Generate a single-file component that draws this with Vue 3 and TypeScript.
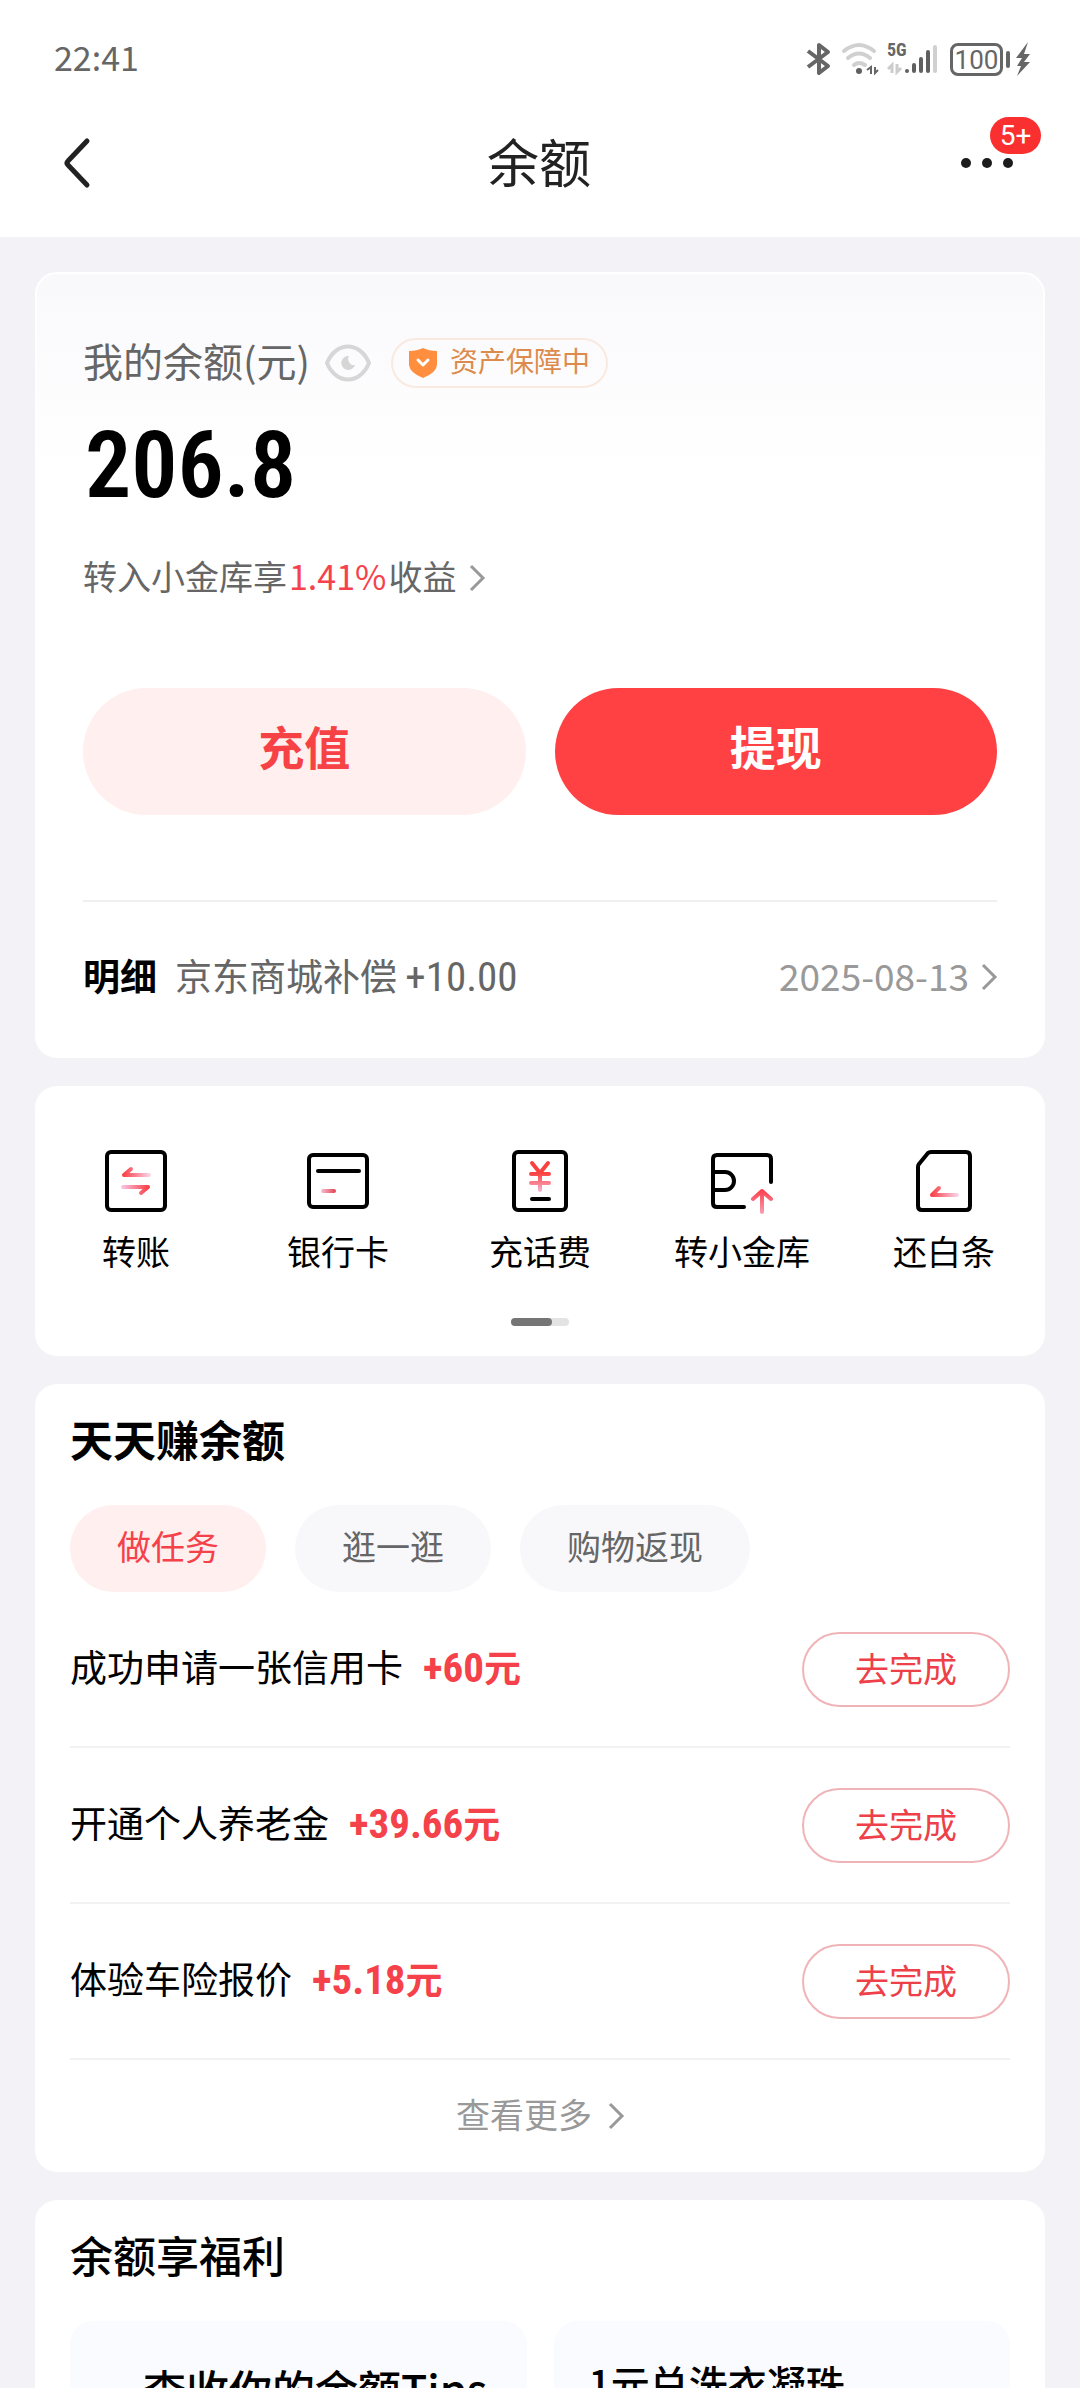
<script setup lang="ts">
import { ref } from 'vue'

type Shortcut = { id: string; label: string }
type Task = { name: string; reward: string }

const shortcuts: Shortcut[] = [
  { id: 'transfer', label: '转账' },
  { id: 'bank', label: '银行卡' },
  { id: 'phone', label: '充话费' },
  { id: 'vault', label: '转小金库' },
  { id: 'repay', label: '还白条' },
]

const tabs: string[] = ['做任务', '逛一逛', '购物返现']
const activeTab = ref<number>(0)

const tasks: Task[] = [
  { name: '成功申请一张信用卡', reward: '+60' },
  { name: '开通个人养老金', reward: '+39.66' },
  { name: '体验车险报价', reward: '+5.18' },
]
</script>

<template>
  <div class="page">
    <header class="top">
      <div class="status">
        <span class="time">22:41</span>
        <div class="status-icons">
          <svg class="bluetooth" width="24" height="34" viewBox="0 0 24 34" fill="none" stroke="#666" stroke-width="4" stroke-linejoin="round">
            <path d="M1 9 L21 24 L12 31 V3 L21 10 L1 25" />
          </svg>
          <svg class="wifi" width="38" height="34" viewBox="0 0 38 34" fill="none" stroke-linecap="round">
            <g stroke="#d0d0d0" stroke-width="4">
              <path d="M3 9 Q18 -3 33 9" />
              <path d="M7 16 Q18 7 29 16" />
              <path d="M13 23 Q18 19 24 23" />
            </g>
            <circle cx="18" cy="29" r="3" fill="#606060" />
            <path d="M26 28 L30 25 V32 M34 25 V31 L37 28" stroke="#666" stroke-width="2" stroke-linecap="butt" />
          </svg>
          <span class="signal">
            <svg width="51" height="34" viewBox="0 0 51 34" fill="none" stroke-linecap="round" stroke-width="4">
              <path d="M1 27 L5 23 V31 M10 22 V30 L14 26" stroke="#ccc" stroke-width="3" stroke-linecap="butt" />
              <path d="M20 29 V29 M27 23 V29 M34 17 V29 M41 10 V29" stroke="#606060" />
              <path d="M48 5 V29" stroke="#d0d0d0" />
            </svg>
            <b class="network">5G</b>
          </span>
          <span class="battery">100</span>
          <svg class="bolt" width="16" height="34" viewBox="0 0 16 34" fill="#666">
            <path d="M13 0 L1 16 H7 L2 24 H6 L2 34 L15 20 H9 L15 12 H9 Z" />
          </svg>
        </div>
      </div>
      <nav class="nav">
        <button class="icon-button" type="button" aria-label="返回">
          <svg width="26" height="50" viewBox="0 0 26 50" fill="none" stroke="#222" stroke-width="5" stroke-linecap="round" stroke-linejoin="round">
            <path d="M23 3 L4 23 Q2 25 4 27 L23 47" />
          </svg>
        </button>
        <h1 class="title">余额</h1>
        <button class="icon-button more" type="button" aria-label="更多">
          <svg width="54" height="12" viewBox="0 0 54 12" fill="#1c1c1c">
            <circle cx="6" cy="6" r="5" />
            <circle cx="27" cy="6" r="5" />
            <circle cx="48" cy="6" r="5" />
          </svg>
          <span class="count">5+</span>
        </button>
      </nav>
    </header>

    <main class="content">
      <section class="card balance">
        <div class="balance-head">
          <span class="balance-label">我的余额(元)</span>
          <button class="icon-button" type="button" aria-label="隐藏余额">
            <svg width="48" height="38" viewBox="0 0 48 38" fill="none">
              <path d="M3 19 C12 -3 36 -3 45 19 C36 41 12 41 3 19 Z" stroke="#d6d6d6" stroke-width="4" stroke-linejoin="round" />
              <path d="M25 12 A7 7 0 1 0 31 21 A6 6 0 0 1 25 12 Z" fill="#d6d6d6" />
            </svg>
          </button>
          <span class="guard">
            <svg width="28" height="32" viewBox="0 0 28 32">
              <path d="M14 1 Q20 4 28 4 V18 Q27 26 14 31 Q1 26 0 18 V4 Q8 4 14 1 Z" fill="#ff8f3e" />
              <path d="M9 13 L14 18 L19 13" fill="none" stroke="#fff" stroke-width="3" stroke-linecap="round" stroke-linejoin="round" />
            </svg>
            <span>资产保障中</span>
          </span>
        </div>
        <strong class="amount">206.8</strong>
        <a class="yield" href="#vault">
          <span>转入小金库享<em>1.41%</em>收益</span>
          <svg class="chevron" width="16" height="28" viewBox="0 0 16 28"><path d="M2 2 L14 14 L2 26" /></svg>
        </a>
        <div class="actions">
          <button class="action soft" type="button">充值</button>
          <button class="action solid" type="button">提现</button>
        </div>
        <a class="detail" href="#records">
          <b>明细</b>
          <span class="record">京东商城补偿 <span class="figure">+10.00</span></span>
          <time class="date" datetime="2025-08-13">2025-08-13</time>
          <svg class="chevron" width="16" height="28" viewBox="0 0 16 28"><path d="M2 2 L14 14 L2 26" /></svg>
        </a>
      </section>

      <section class="card">
        <svg class="defs" width="0" height="0" aria-hidden="true">
          <defs>
            <linearGradient id="fade-right" gradientUnits="userSpaceOnUse" x1="19" y1="0" x2="46" y2="0">
              <stop offset="0" stop-color="#fb3c44" />
              <stop offset="1" stop-color="#f8d4ea" />
            </linearGradient>
            <linearGradient id="fade-left" gradientUnits="userSpaceOnUse" x1="18" y1="0" x2="45" y2="0">
              <stop offset="0" stop-color="#f8c4e2" />
              <stop offset="1" stop-color="#fb3c44" />
            </linearGradient>
            <linearGradient id="fade-short" gradientUnits="userSpaceOnUse" x1="14" y1="0" x2="30" y2="0">
              <stop offset="0" stop-color="#fbc8da" />
              <stop offset="1" stop-color="#e04050" />
            </linearGradient>
            <linearGradient id="fade-down" gradientUnits="userSpaceOnUse" x1="0" y1="24" x2="0" y2="44">
              <stop offset="0" stop-color="#fb4040" />
              <stop offset="1" stop-color="#f8c0dc" />
            </linearGradient>
            <linearGradient id="fade-arrow" gradientUnits="userSpaceOnUse" x1="0" y1="40" x2="0" y2="64">
              <stop offset="0" stop-color="#fb3c48" />
              <stop offset="1" stop-color="#f89cb4" />
            </linearGradient>
          </defs>
        </svg>
        <ul class="shortcuts">
          <li v-for="item in shortcuts" :key="item.id">
            <a class="shortcut" :href="'#' + item.id">
              <svg class="shortcut-icon" width="64" height="64" viewBox="0 0 64 64">
                <template v-if="item.id === 'transfer'">
                  <rect x="3" y="3" width="58" height="58" rx="4" />
                  <path d="M45 26 H20 L27 20" stroke="url(#fade-right)" />
                  <path d="M19 38 H44 L37 44" stroke="url(#fade-left)" />
                </template>
                <template v-else-if="item.id === 'bank'">
                  <rect x="3" y="6" width="58" height="52" rx="4" />
                  <path d="M12 22 H53" />
                  <path d="M17 42 L28 42.01" stroke="url(#fade-short)" />
                </template>
                <template v-else-if="item.id === 'phone'">
                  <rect x="6" y="3" width="52" height="58" rx="4" />
                  <path d="M24 14 L32 24 L40 14 M32 24 V41 M23 25 H41 M23 34 H41" stroke="url(#fade-down)" />
                  <path d="M24 50 H41" />
                </template>
                <template v-else-if="item.id === 'vault'">
                  <path d="M61 33 V10 Q61 6 57 6 H7 Q3 6 3 10 V54 Q3 58 7 58 H34" />
                  <path d="M4 23 H15 A9 9 0 0 1 15 41 H4" />
                  <path d="M43 50 L52 42 L61 50 M52 42 L52.01 63" stroke="url(#fade-arrow)" />
                </template>
                <template v-else>
                  <path d="M19 3 H54 Q58 3 58 7 V57 Q58 61 54 61 H10 Q6 61 6 57 V18 Q6 16 7 15 L16 4 Q17 3 19 3 Z" />
                  <path d="M45 46 H20 L27 39" stroke="url(#fade-right)" />
                </template>
              </svg>
              {{ item.label }}
            </a>
          </li>
        </ul>
        <div class="pager"><i></i></div>
      </section>

      <section class="card padded">
        <h2 class="heading strong">天天赚余额</h2>
        <div class="tabs" role="tablist">
          <button
            v-for="(tab, i) in tabs"
            :key="tab"
            class="tab"
            :class="{ active: i === activeTab }"
            type="button"
            role="tab"
            :aria-selected="i === activeTab"
            @click="activeTab = i"
          >{{ tab }}</button>
        </div>
        <ul class="tasks">
          <li v-for="task in tasks" :key="task.name" class="task">
            <span class="task-name">{{ task.name }}<b class="reward"><span class="figure">{{ task.reward }}</span>元</b></span>
            <button class="go" type="button">去完成</button>
          </li>
        </ul>
        <a class="see-more" href="#tasks">
          <span>查看更多</span>
          <svg class="chevron" width="16" height="28" viewBox="0 0 16 28"><path d="M2 2 L14 14 L2 26" /></svg>
        </a>
      </section>

      <section class="card padded">
        <h2 class="heading">余额享福利</h2>
        <div class="benefits">
          <a class="benefit tips" href="#tips">查收你的余额Tips</a>
          <a class="benefit" href="#offer">1元兑洗衣凝珠</a>
        </div>
      </section>
    </main>
  </div>
</template>

<style>
body {
  margin: 0;
  background: #f2f2f7;
}
</style>

<style scoped>
.page {
  height: 100vh;
  overflow: hidden;
  background: #f2f2f7;
  color: #000;
  font-family: "Noto Sans CJK SC", "Noto Sans", sans-serif;
  font-size: 34px;
  line-height: 48px;
}
.page * {
  box-sizing: border-box;
}
button {
  margin: 0;
  padding: 0;
  border: 0;
  background: none;
  font: inherit;
  color: inherit;
}
a {
  color: inherit;
  text-decoration: none;
}
ul {
  margin: 0;
  padding: 0;
  list-style: none;
}
svg {
  display: block;
  flex: none;
  overflow: visible;
}
.figure {
  font-family: "Roboto Condensed", Roboto, sans-serif;
  font-size: 41px;
  line-height: 40px;
}

.top {
  background: #fff;
}
.status {
  display: flex;
  align-items: center;
  justify-content: space-between;
  height: 92px;
  padding: 26px 49px 0 54px;
}
.time {
  padding-bottom: 4px;
  color: #666;
}
.status-icons {
  display: flex;
  align-items: center;
}
.wifi {
  margin-left: 10px;
}
.signal {
  position: relative;
  margin: 0 12px 0 8px;
}
.network {
  position: absolute;
  top: 0;
  left: 0;
  color: #666;
  font-family: "Roboto Condensed", Roboto, sans-serif;
  font-size: 18px;
  line-height: 16px;
}
.battery {
  position: relative;
  width: 53px;
  height: 33px;
  margin-right: 12px;
  border: 3px solid #666;
  border-radius: 8px;
  color: #666;
  font-family: Roboto, sans-serif;
  font-size: 26px;
  line-height: 28px;
  text-align: center;
}
.battery::after {
  content: "";
  position: absolute;
  top: 5px;
  right: -10px;
  width: 4px;
  height: 17px;
  border-radius: 2px;
  background: #666;
}
.nav {
  display: flex;
  align-items: center;
  justify-content: space-between;
  height: 145px;
  padding: 0 66px 3px 64px;
}
.icon-button {
  display: flex;
  align-items: center;
}
.nav .icon-button {
  width: 54px;
}
.title {
  margin: 0;
  padding-bottom: 4px;
  color: #222;
  font-size: 52px;
  font-weight: 400;
  line-height: 72px;
}
.more {
  position: relative;
}
.count {
  position: absolute;
  bottom: 15px;
  left: 30px;
  width: 51px;
  height: 37px;
  border-radius: 19px;
  background: #fa2f2f;
  color: #fff;
  font-family: Roboto, sans-serif;
  font-size: 28px;
  line-height: 38px;
}

.content {
  display: flex;
  flex-direction: column;
  gap: 28px;
  padding: 35px 35px 0;
}
.card {
  border-radius: 22px;
  background: #fff;
}
.padded {
  padding: 29px 35px 0;
}

.balance {
  display: flex;
  flex-direction: column;
  padding: 64px 46px 0;
  border: 2px solid #fff;
  background: linear-gradient(#f9f9fc, #fff 200px);
}
.balance-head {
  display: flex;
  align-items: center;
  height: 50px;
}
.balance-label {
  margin-right: 14px;
  padding-bottom: 6px;
  color: #666;
  font-size: 40px;
}
.guard {
  display: flex;
  align-items: center;
  gap: 13px;
  height: 50px;
  margin-left: 19px;
  padding: 0 16px;
  border: 2px solid #fae9df;
  border-radius: 25px;
  color: #dd8b4c;
  font-size: 28px;
}
.guard span {
  padding-bottom: 6px;
}
.amount {
  margin: 30px 0 40px;
  padding-left: 2px;
  font-family: "Roboto Condensed", Roboto, sans-serif;
  font-size: 92px;
  font-weight: 600;
  line-height: 96px;
}
.yield {
  display: flex;
  align-items: center;
  align-self: flex-start;
  gap: 13px;
  color: #666;
}
.yield span {
  padding-bottom: 4px;
  line-height: 44px;
}
.yield em {
  margin: 0 2px;
  color: #f5424d;
  font-style: normal;
}
.chevron {
  fill: none;
  stroke: #999;
  stroke-width: 3;
}
.actions {
  display: flex;
  gap: 29px;
  margin: 86px 0 85px;
}
.action {
  flex: 1;
  height: 127px;
  padding-bottom: 14px;
  border-radius: 64px;
  font-size: 46px;
  font-weight: 700;
}
.soft {
  background: #ffefef;
  color: #f74245;
}
.solid {
  background: #ff4144;
  color: #fff;
}
.detail {
  display: flex;
  align-items: center;
  height: 156px;
  padding-bottom: 4px;
  border-top: 2px solid #f0f0f2;
  color: #666;
  font-size: 37px;
}
.detail b {
  margin-right: 18px;
  padding-bottom: 4px;
  color: #000;
}
.record,
.date {
  padding-bottom: 4px;
}
.date {
  margin: 0 12px 0 auto;
  color: #999;
}

.defs {
  position: absolute;
}
.shortcuts {
  display: grid;
  grid-template-columns: repeat(5, 1fr);
  padding-top: 63px;
}
.shortcut {
  display: flex;
  flex-direction: column;
  align-items: center;
  gap: 14px;
}
.shortcut-icon {
  fill: none;
  stroke: #000;
  stroke-width: 4;
  stroke-linecap: round;
  stroke-linejoin: round;
}
.pager {
  width: 58px;
  height: 8px;
  margin: 43px auto 30px;
  border-radius: 4px;
  background: #e3e3e3;
}
.pager i {
  display: block;
  width: 41px;
  height: 8px;
  border-radius: 4px;
  background: #757575;
}

.heading {
  margin: 0 0 42px;
  font-size: 43px;
  font-weight: 500;
  line-height: 50px;
}
.heading.strong {
  font-weight: 700;
}
.tabs {
  display: flex;
  gap: 29px;
}
.tab {
  height: 87px;
  padding: 0 47px 6px;
  border-radius: 44px;
  background: #f8f8fb;
  color: #666;
}
.tab.active {
  background: #ffefef;
  color: #f5424a;
}
.task {
  display: flex;
  align-items: center;
  height: 156px;
  border-bottom: 2px solid #f2f2f4;
  font-size: 37px;
}
.task-name {
  padding-bottom: 6px;
}
.reward {
  margin-left: 20px;
  color: #f5424a;
}
.go {
  width: 208px;
  height: 75px;
  margin-left: auto;
  padding-bottom: 2px;
  border: 2px solid #f0b4b8;
  border-radius: 38px;
  color: #ee4048;
  font-size: 34px;
}
.see-more {
  display: flex;
  align-items: center;
  justify-content: center;
  gap: 16px;
  height: 112px;
  color: #999;
}
.see-more span {
  padding-bottom: 4px;
}

.benefits {
  display: grid;
  grid-template-columns: 1fr 1fr;
  gap: 27px;
}
.benefit {
  min-height: 200px;
  padding: 37px 35px;
  border-radius: 24px;
  background: #fafbff;
  font-size: 39px;
  font-weight: 500;
}
.benefit.tips {
  padding: 43px 0 43px 73px;
  font-size: 43px;
}
</style>
